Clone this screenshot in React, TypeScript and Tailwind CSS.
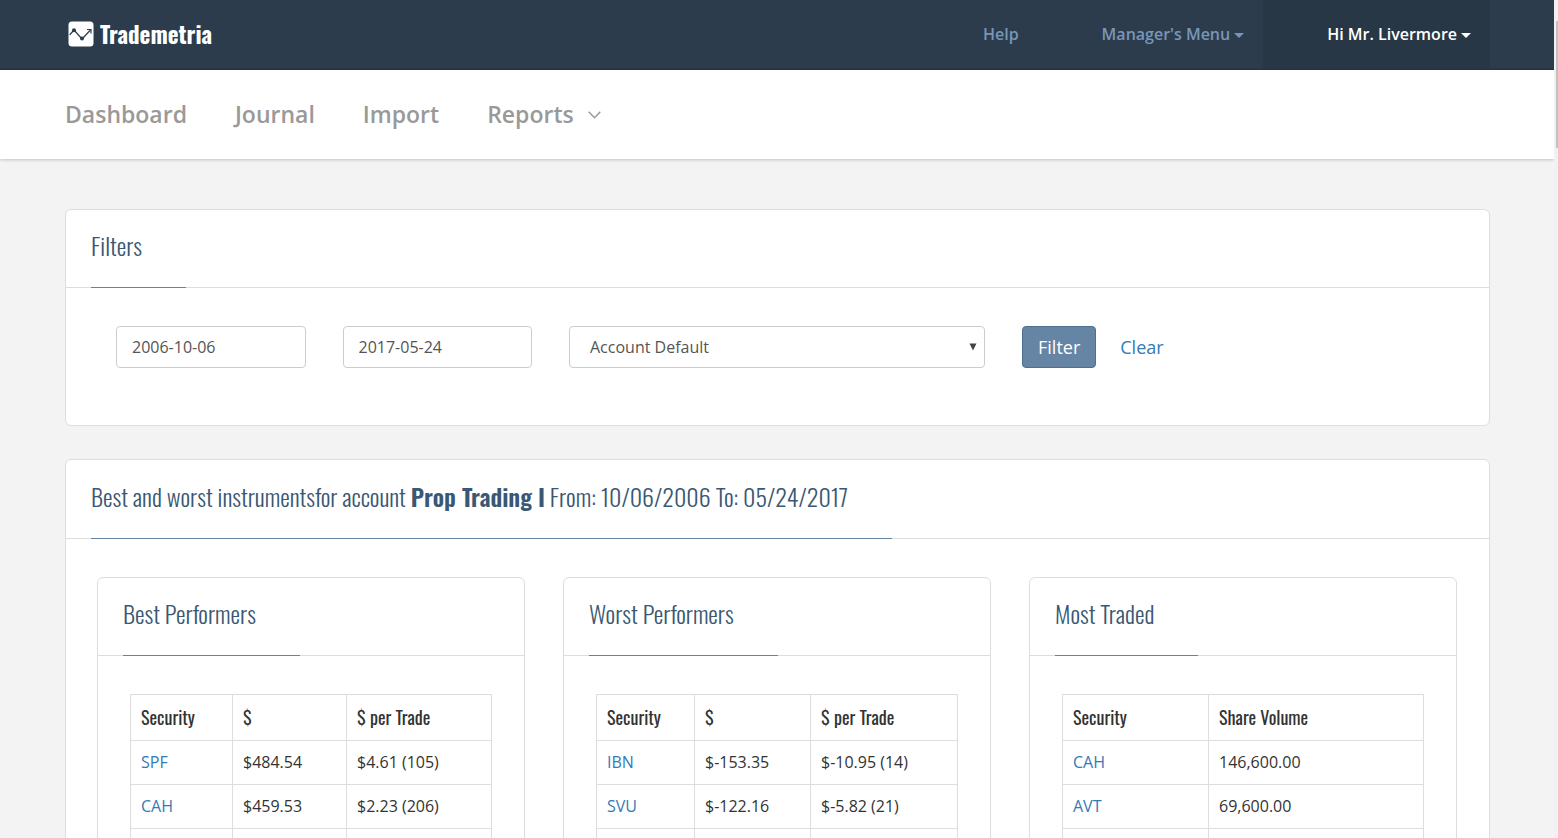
import React from 'react';

type Column = { label: string; width: string };
type Panel = { title: string; columns: Column[]; rows: string[][] };

const panels: Panel[] = [
  {
    title: 'Best Performers',
    columns: [
      { label: 'Security', width: 'w-[102px]' },
      { label: '$', width: 'w-[114px]' },
      { label: '$ per Trade', width: 'w-auto' },
    ],
    rows: [
      ['SPF', '$484.54', '$4.61 (105)'],
      ['CAH', '$459.53', '$2.23 (206)'],
      ['', '', ''],
    ],
  },
  {
    title: 'Worst Performers',
    columns: [
      { label: 'Security', width: 'w-[98px]' },
      { label: '$', width: 'w-[116px]' },
      { label: '$ per Trade', width: 'w-auto' },
    ],
    rows: [
      ['IBN', '$-153.35', '$-10.95 (14)'],
      ['SVU', '$-122.16', '$-5.82 (21)'],
      ['', '', ''],
    ],
  },
  {
    title: 'Most Traded',
    columns: [
      { label: 'Security', width: 'w-[146px]' },
      { label: 'Share Volume', width: 'w-auto' },
    ],
    rows: [
      ['CAH', '146,600.00'],
      ['AVT', '69,600.00'],
      ['', ''],
    ],
  },
];

const narrow = "font-['Oswald','Liberation_Sans_Narrow',sans-serif]";

function Caret() {
  return (
    <svg aria-hidden viewBox="0 0 10 5" className="ml-1 mt-0.5 h-[5px] w-[10px] fill-current">
      <path d="M0 0h10L5 5z" />
    </svg>
  );
}

function Logo() {
  return (
    <a href="#" className="ml-[3px] flex items-center gap-[6px] text-white">
      <svg aria-hidden viewBox="0 0 26 26" className="size-[26px]">
        <rect x="0.5" y="0.5" width="25" height="25" rx="3.5" fill="#fff" />
        <path
          d="M2 13.5 6 9l8 9 8-8.5"
          fill="none"
          stroke="#2c3c4d"
          strokeWidth="1.2"
          strokeLinecap="round"
          strokeLinejoin="round"
        />
        <path d="M19 8.5h4v4" fill="none" stroke="#2c3c4d" strokeWidth="1.2" />
        <circle cx="6" cy="9.3" r="2" fill="#2c3c4d" />
        <circle cx="14" cy="17.5" r="2" fill="#2c3c4d" />
      </svg>
      <span className={`${narrow} text-[23px] leading-6 font-bold`}>Trademetria</span>
    </a>
  );
}

function TopBar() {
  return (
    <header className="flex h-[70px] items-stretch justify-between border-b-2 border-[#283746] bg-[#2c3c4d] pr-16 pl-[65px]">
      <Logo />
      <nav className="flex text-base font-semibold text-[#7996b6]">
        <a href="#" className="flex items-center pr-[19px] pl-16">
          Help
        </a>
        <button type="button" className="flex items-center pr-[19px] pl-16">
          Manager's Menu
          <Caret />
        </button>
        <button type="button" className="flex items-center bg-[#283746] pr-[19px] pl-16 text-white">
          Hi Mr. Livermore
          <Caret />
        </button>
      </nav>
    </header>
  );
}

function MainNav() {
  return (
    <nav className="flex h-[89px] items-center gap-12 bg-white pr-16 pl-[65px] text-[23px] font-semibold text-[#999] shadow-[0_1px_3px_rgba(0,0,0,0.2)]">
      <a href="#">Dashboard</a>
      <a href="#">Journal</a>
      <a href="#">Import</a>
      <button type="button" className="flex items-center gap-[14px]">
        Reports
        <svg
          aria-hidden
          viewBox="0 0 13 8"
          className="h-2 w-[13px] fill-none stroke-current stroke-[1.5]"
        >
          <path d="m0.7 0.7 5.8 6 5.8-6" />
        </svg>
      </button>
    </nav>
  );
}

function Card({ title, children }: { title: React.ReactNode; children: React.ReactNode }) {
  return (
    <section className="rounded-md border border-[#ddd] bg-white">
      <div className="flex border-b border-[#ddd] px-[25px]">
        <h2
          className={`${narrow} -mb-px border-b border-[#6484a3] pt-[17px] pr-11 pb-6 text-2xl leading-9 font-light text-[#3a5873]`}
        >
          {title}
        </h2>
      </div>
      {children}
    </section>
  );
}

function Filters() {
  return (
    <Card title="Filters">
      <form className="grid grid-cols-6 gap-[37px] pt-[38px] pr-[51px] pb-[57px] pl-[50px] text-[#555]">
        <input
          aria-label="From date"
          defaultValue="2006-10-06"
          className="h-[42px] w-full rounded border border-[#ccc] px-[15px]"
        />
        <input
          aria-label="To date"
          defaultValue="2017-05-24"
          className="h-[42px] w-full rounded border border-[#ccc] px-[15px]"
        />
        <div className="relative col-span-2">
          <select
            aria-label="Account"
            className="h-[42px] w-full appearance-none rounded border border-[#ccc] bg-white px-5"
          >
            <option>Account Default</option>
          </select>
          <svg
            aria-hidden
            viewBox="0 0 8 8"
            className="pointer-events-none absolute top-[17px] right-2 size-2 fill-[#444]"
          >
            <path d="M0.5 0.5h7L4 7.5z" />
          </svg>
        </div>
        <div className="col-span-2 flex items-center gap-6 text-lg">
          <button
            type="button"
            className="h-[42px] rounded border border-[#4d6f91] bg-[#6685a4] px-[15px] text-white"
          >
            Filter
          </button>
          <a href="#" className="text-[#337ab7]">
            Clear
          </a>
        </div>
      </form>
    </Card>
  );
}

function PanelTable({ columns, rows }: { columns: Column[]; rows: string[][] }) {
  return (
    <table className="w-full table-fixed border-collapse text-left text-[#333]">
      <thead>
        <tr className="h-[46px]">
          {columns.map((c) => (
            <th
              key={c.label}
              className={`${narrow} ${c.width} border border-[#ddd] px-[10px] pb-[2px] text-lg font-normal`}
            >
              {c.label}
            </th>
          ))}
        </tr>
      </thead>
      <tbody>
        {rows.map((row, i) => (
          <tr key={i} className="h-11">
            {row.map((cell, j) => (
              <td key={j} className="border border-[#ddd] px-[10px] pb-[2px]">
                {j === 0 && cell ? (
                  <a href="#" className="text-[#337ab7]">
                    {cell}
                  </a>
                ) : (
                  cell
                )}
              </td>
            ))}
          </tr>
        ))}
      </tbody>
    </table>
  );
}

export default function App() {
  return (
    <div className="flex h-screen overflow-hidden bg-[#f3f3f3] font-['Open_Sans','Noto_Sans',sans-serif] text-base">
      <div className="min-w-0 flex-1">
        <TopBar />
        <MainNav />
        <main className="flex flex-col gap-[33px] pt-[50px] pr-16 pl-[65px]">
          <Filters />
          <Card
            title={
              <>
                Best and worst instrumentsfor account{' '}
                <strong className="inline-block pt-px font-semibold">Prop Trading I</strong> From:
                10/06/2006 To: 05/24/2017
              </>
            }
          >
            <div className="grid grid-cols-3 gap-[38px] py-[38px] pr-8 pl-[31px]">
              {panels.map((p) => (
                <Card key={p.title} title={p.title}>
                  <div className="px-8 py-[38px]">
                    <PanelTable columns={p.columns} rows={p.rows} />
                  </div>
                </Card>
              ))}
            </div>
          </Card>
        </main>
      </div>

      {/* slim scroll track */}
      <div aria-hidden className="w-1 bg-[#f1f1f1] pt-[21px] pl-[2px]">
        <div className="h-[127px] bg-[#c1c1c1]" />
      </div>
    </div>
  );
}
